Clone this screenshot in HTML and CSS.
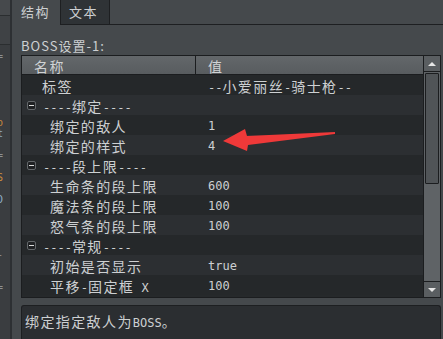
FILE: index.html
```html
<!doctype html>
<html lang="zh">

<head>
    <meta charset="utf-8">
    <title>BOSS设置</title>
    <link rel="stylesheet" href="styles.css">
</head>

<body>
    <div class="window">
        <div class="side">
            <div class="side-top"></div>
            <div class="side-head"></div>
            <div class="side-lines">
                <div class="fl">a=</div>
                <div class="fl"></div>
                <div class="fl"></div>
                <div class="fl"></div>
                <div class="fl"></div>
                <div class="fl"></div>
                <div class="fl o">to</div>
                <div class="fl b">st</div>
                <div class="fl"></div>
                <div class="fl">x=</div>
                <div class="fl"></div>
                <div class="fl o">SS</div>
                <div class="fl"></div>
                <div class="fl b">ID</div>
                <div class="fl"></div>
                <div class="fl"></div>
                <div class="fl"></div>
                <div class="fl"></div>
                <div class="fl">--</div>
                <div class="fl"></div>
                <div class="fl"></div>
                <div class="fl">y=</div>
            </div>
        </div>
        <div class="side-edge"></div>

        <div class="panel">
            <div class="tabs">
                <div class="tab active">结构</div>
                <div class="tab other">文本</div>
                <div class="tab-fill"></div>
            </div>

            <div class="content">
                <div class="caption">BOSS设置-1:</div>

                <div class="table">
                    <div class="grid">
                        <div class="head">
                            <div class="hc1">名称</div>
                            <div class="hc2">值</div>
                        </div>

                        <div class="row">
                            <div class="n lvl1">标签</div>
                            <div class="v"><span class="m">--</span><span class="c">小爱丽丝</span>-<span class="c">骑士枪</span>--</div>
                        </div>
                        <div class="row alt">
                            <div class="n grp"><span class="minus"></span><span><span class="m">----</span>绑定<span class="m">----</span></span></div>
                            <div class="v"></div>
                        </div>
                        <div class="row">
                            <div class="n lvl2">绑定的敌人</div>
                            <div class="v">1</div>
                        </div>
                        <div class="row alt">
                            <div class="n lvl2">绑定的样式</div>
                            <div class="v">4</div>
                        </div>
                        <div class="row">
                            <div class="n grp"><span class="minus"></span><span><span class="m">----</span>段上限<span class="m">----</span></span></div>
                            <div class="v"></div>
                        </div>
                        <div class="row alt">
                            <div class="n lvl2">生命条的段上限</div>
                            <div class="v">600</div>
                        </div>
                        <div class="row">
                            <div class="n lvl2">魔法条的段上限</div>
                            <div class="v">100</div>
                        </div>
                        <div class="row alt">
                            <div class="n lvl2">怒气条的段上限</div>
                            <div class="v">100</div>
                        </div>
                        <div class="row">
                            <div class="n grp"><span class="minus"></span><span><span class="m">----</span>常规<span class="m">----</span></span></div>
                            <div class="v"></div>
                        </div>
                        <div class="row alt">
                            <div class="n lvl2">初始是否显示</div>
                            <div class="v">true</div>
                        </div>
                        <div class="row">
                            <div class="n lvl2">平移<span class="m">-</span>固定框<span class="m"> X</span></div>
                            <div class="v">100</div>
                        </div>
                    </div>

                    <div class="sb">
                        <div class="sb-btn up"><span class="tri-up"></span></div>
                        <div class="sb-track"><div class="sb-thumb"></div></div>
                        <div class="sb-btn down"><span class="tri-down"></span></div>
                    </div>
                </div>

                <div class="desc">绑定指定敌人为<span class="m">BOSS</span>。</div>
            </div>
        </div>

        <!-- red annotation arrow -->
        <svg class="arrow" width="443" height="339" viewBox="0 0 443 339">
            <polygon points="223,141 245,129 247,136 335,132 335,134 248,145 247,151" fill="#ef3939" />
        </svg>
    </div>
</body>

</html>
```

FILE: styles.css
```css
body {
    margin: 0;
    width: 443px;
    height: 339px;
    overflow: hidden;
    background-color: #45494c;
    font-family: "Noto Sans CJK SC", sans-serif;
    color: #cdd0d2;
}

.window {
    position: relative;
    display: flex;
    height: 339px;
}

/* cut-off neighbour panel on the left */
.side {
    width: 10px;
    background-color: #3a3d40;
    display: flex;
    flex-direction: column;
}

.side-top {
    height: 15px;
    background-color: #46494c;
    border-bottom: 1px solid #2b2e30;
}

.side-head {
    height: 28px;
    background-color: #3f4245;
    border-bottom: 1px solid #2b2e30;
}

.side-lines {
    padding-top: 6px;
    font-family: "DejaVu Sans Mono", monospace;
    font-size: 10px;
    line-height: 11px;
}

.fl {
    height: 11px;
    display: flex;
    justify-content: flex-end;
    overflow: hidden;
    padding-right: 7px;
    white-space: nowrap;
    color: #8d9194;
}

.fl.o {
    color: #c98a3e;
}

.fl.b {
    color: #8fb0c8;
}

.side-edge {
    width: 2px;
    background-color: #2d3033;
}

.panel {
    flex: 1;
    min-width: 0;
    display: flex;
    flex-direction: column;
}

.tabs {
    display: flex;
    height: 25px;
}

.tab {
    box-sizing: border-box;
    font-size: 13px;
    letter-spacing: 1.5px;
    line-height: 24px;
}

.tab.active {
    width: 48px;
    padding-left: 9px;
}

.tab.other {
    width: 50px;
    padding-left: 8px;
    background-color: #2f3336;
    border: 1px solid #1d1f21;
    border-top: 0;
}

.tab-fill {
    flex: 1;
    border-bottom: 1px solid #1d1f21;
}

.content {
    flex: 1;
    display: flex;
    flex-direction: column;
    padding: 0 2px 0 9px;
}

.caption {
    margin-top: 12px;
    height: 18px;
    line-height: 18px;
    font-size: 13px;
    letter-spacing: 1px;
}

.table {
    height: 243px;
    box-sizing: border-box;
    border: 1px solid #1b1d1f;
    display: flex;
    background-color: #26292b;
}

.grid {
    flex: 1;
}

.head {
    display: flex;
    height: 19px;
    box-sizing: border-box;
    border-bottom: 1px solid #1b1d1f;
    background: linear-gradient(#63676a, #585c5f);
    font-size: 14px;
    letter-spacing: 1.4px;
    line-height: 20px;
    color: #d0d3d5;
}

.hc1 {
    width: 174px;
    box-sizing: border-box;
    border-right: 1px solid #1b1d1f;
    padding-left: 12px;
}

.hc2 {
    padding-left: 12px;
}

.row {
    display: flex;
    height: 20px;
    line-height: 22px;
    white-space: nowrap;
    background-color: #25282a;
}

.row.alt {
    background-color: #2c2f32;
}

.n {
    width: 174px;
    box-sizing: border-box;
    font-size: 14px;
    letter-spacing: 1.4px;
}

.lvl1 {
    padding-left: 20px;
}

.lvl2 {
    padding-left: 28px;
}

.grp {
    display: flex;
    align-items: flex-start;
    padding-left: 5px;
}

.minus {
    position: relative;
    width: 9px;
    height: 9px;
    box-sizing: border-box;
    margin: 6px 7px 0 0;
    border: 1px solid #63676a;
    border-radius: 2px;
    background-color: #1f2123;
}

.minus::after {
    content: "";
    position: absolute;
    left: 1px;
    top: 3px;
    width: 5px;
    height: 1px;
    background-color: #dcdcdc;
}

.v {
    flex: 1;
    padding-left: 12px;
    font-family: "DejaVu Sans Mono", monospace;
    font-size: 12px;
}

.m {
    font-family: "DejaVu Sans Mono", monospace;
    font-size: 12px;
    letter-spacing: 0;
}

.c {
    font-family: "Noto Sans CJK SC", sans-serif;
    font-size: 14px;
    letter-spacing: 1.4px;
}

.sb {
    width: 16px;
    border-left: 1px solid #1b1d1f;
    display: flex;
    flex-direction: column;
    background-color: #5f6366;
}

.sb-btn {
    height: 15px;
    display: flex;
    align-items: center;
    justify-content: center;
    background-color: #5a5e61;
}

.sb-btn.up {
    border-bottom: 1px solid #1b1d1f;
}

.sb-btn.down {
    border-top: 1px solid #1b1d1f;
}

.tri-up {
    border-left: 4px solid transparent;
    border-right: 4px solid transparent;
    border-bottom: 4px solid #e6e6e6;
}

.tri-down {
    border-left: 4px solid transparent;
    border-right: 4px solid transparent;
    border-top: 4px solid #e6e6e6;
}

.sb-track {
    flex: 1;
    padding: 1px;
}

.sb-thumb {
    height: 111px;
    box-sizing: border-box;
    border: 1px solid #1b1d1f;
    border-radius: 1px;
    background-color: #505457;
}

.desc {
    flex: 1;
    margin-top: 7px;
    padding: 4px 0 0 3px;
    background-color: #2b2e31;
    border: 1px solid #1d1f21;
    border-bottom: 0;
    border-radius: 3px 3px 0 0;
    font-size: 14px;
    letter-spacing: 1.4px;
    line-height: 22px;
}

.arrow {
    position: absolute;
    left: 0;
    top: 0;
    pointer-events: none;
}
```
